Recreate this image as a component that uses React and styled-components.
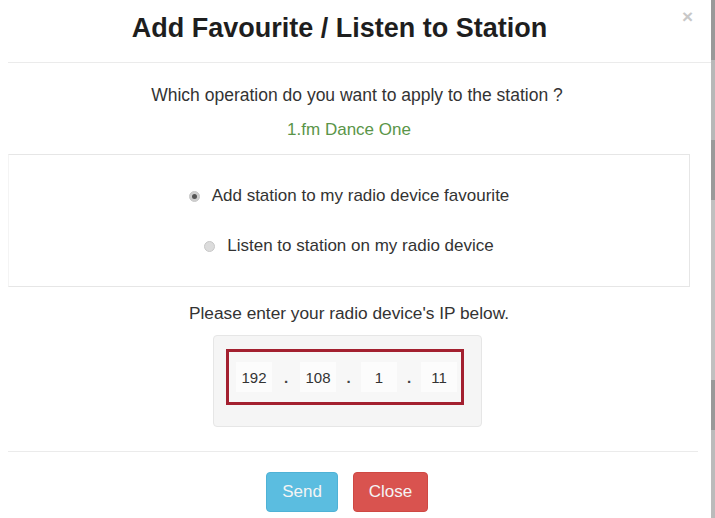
import React from "react";
import styled, { createGlobalStyle } from "styled-components";

const Global = createGlobalStyle`
  html, body { margin: 0; padding: 0; background: #fff; }
  body { font-family: "Liberation Sans", Arial, sans-serif; color: #333; }
  * { box-sizing: border-box; }
`;

const Page = styled.div`
  display: flex;
  width: 715px;
  height: 518px;
  overflow: hidden;
`;

const Dialog = styled.div`
  flex: 1;
  display: flex;
  flex-direction: column;
`;

const ScrollStrip = styled.div`
  width: 4px;
  background: linear-gradient(#999 0, #999 60px, #b8b8b8 60px, #b8b8b8 140px, #9a9a9a 140px, #9a9a9a 200px, #c0c0c0 200px, #c0c0c0 380px, #999 380px, #999 430px, #bbb 430px);
`;

const Header = styled.div`
  position: relative;
  height: 63px;
  margin-left: 8px;
  padding-right: 40px;
  border-bottom: 1px solid #ebebeb;
  display: flex;
  align-items: center;
  justify-content: center;
  padding-bottom: 6px;
`;

const Title = styled.h4`
  margin: 0;
  font-size: 27px;
  font-weight: 700;
  color: #1e1e1e;
`;

const CloseX = styled.span`
  position: absolute;
  right: 18px;
  top: 6px;
  font-size: 19px;
  color: #c8c8c8;
  font-weight: 700;
`;

const Body = styled.div`
  width: 682px;
  margin-left: 8px;
  display: flex;
  flex-direction: column;
  align-items: center;
`;

const Question = styled.p`
  margin: 21px 0 0 16px;
  font-size: 17.5px;
  line-height: 22px;
  color: #333;
`;

const Station = styled.p`
  margin: 13px 0 0;
  font-size: 17px;
  line-height: 22px;
  color: #5a9549;
`;

const Panel = styled.div`
  align-self: stretch;
  margin-top: 13px;
  height: 133px;
  border: 1px solid #e6e6e6;
  border-left-color: #f4f4f4;
  display: flex;
  flex-direction: column;
  align-items: center;
  padding-top: 30px;
  gap: 28px;
`;

const RadioRow = styled.label`
  display: flex;
  align-items: center;
  gap: 12px;
  font-size: 17px;
  line-height: 22px;
  color: #333;
`;

const RadioDot = styled.span`
  width: 11px;
  height: 11px;
  border-radius: 50%;
  background: ${(p) => (p.$checked ? "#cfcfcf" : "#dcdcdc")};
  border: 1px solid #c8c8c8;
  display: flex;
  align-items: center;
  justify-content: center;
  &::after {
    content: "";
    width: 5px;
    height: 5px;
    border-radius: 50%;
    background: ${(p) => (p.$checked ? "#555" : "transparent")};
  }
`;

const Prompt = styled.p`
  margin: 15px 0 0;
  font-size: 17.3px;
  line-height: 22px;
  color: #333;
`;

const Well = styled.div`
  margin-top: 11px;
  width: 269px;
  height: 92px;
  background: #f5f5f5;
  border: 1px solid #e6e6e6;
  border-radius: 4px;
  padding: 13px 19px 0 12px;
  margin-left: -3px;
`;

const IpBox = styled.div`
  width: 238px;
  height: 56px;
  border: 3px solid #a3202f;
  background: #f7f7f7;
  display: flex;
  align-items: center;
  padding: 0 4px 0 7px;
`;

const Octet = styled.span`
  width: 36px;
  height: 30px;
  display: flex;
  align-items: center;
  justify-content: center;
  background: #fcfcfc;
  font-size: 15px;
  color: #333;
`;

const Dot = styled.span`
  width: ${(p) => p.$w}px;
  text-align: center;
  font-size: 15px;
  font-weight: 700;
  color: #444;
`;

const Footer = styled.div`
  margin-left: 8px;
  width: 690px;
  margin-top: 24px;
  border-top: 1px solid #ebebeb;
  display: flex;
  justify-content: center;
  gap: 15px;
  padding-top: 20px;
  padding-right: 12px;
`;

const Button = styled.button`
  width: ${(p) => p.$w}px;
  height: 40px;
  border: 1px solid ${(p) => p.$border};
  border-radius: 4px;
  background: ${(p) => p.$bg};
  color: #f4f4f4;
  font-family: "Liberation Sans", Arial, sans-serif;
  font-size: 17px;
  padding: 0;
`;

export default function App() {
  return (
    <Page>
      <Global />
      <Dialog>
        <Header>
          <Title>Add Favourite / Listen to Station</Title>
          <CloseX>×</CloseX>
        </Header>
        <Body>
          <Question>Which operation do you want to apply to the station ?</Question>
          <Station>1.fm Dance One</Station>
          <Panel>
            <RadioRow>
              <RadioDot $checked />
              Add station to my radio device favourite
            </RadioRow>
            <RadioRow>
              <RadioDot />
              Listen to station on my radio device
            </RadioRow>
          </Panel>
          <Prompt>Please enter your radio device's IP below.</Prompt>
          <Well>
            <IpBox>
              <Octet>192</Octet>
              <Dot $w={28}>.</Dot>
              <Octet>108</Octet>
              <Dot $w={25}>.</Dot>
              <Octet>1</Octet>
              <Dot $w={24}>.</Dot>
              <Octet>11</Octet>
            </IpBox>
          </Well>
        </Body>
        <Footer>
          <Button $w={72} $bg="#5bbde0" $border="#4fb2d6">Send</Button>
          <Button $w={75} $bg="#d9534f" $border="#cf4843">Close</Button>
        </Footer>
      </Dialog>
      <ScrollStrip />
    </Page>
  );
}
